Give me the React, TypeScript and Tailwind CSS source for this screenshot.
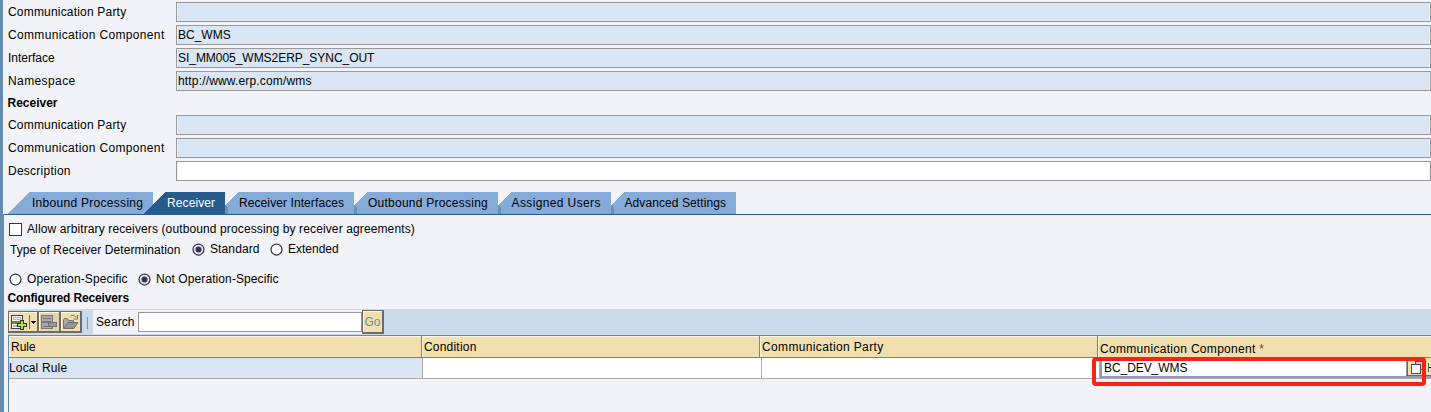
import type { ReactNode } from "react";

function Field({ label, ls, value, vls = "", white = false }: { label: string; ls: string; value?: string; vls?: string; white?: boolean }) {
  return (
    <div className="flex h-[23px] shrink-0 items-start pl-[8px]">
      <span className={"mt-[1px] w-[168px] shrink-0 leading-[18px] " + ls}>{label}</span>
      <div
        className={
          "h-[20px] grow border border-[#989898] pl-[1px] leading-[18px] shadow-[inset_1px_0_#eef3f9,inset_-1px_0_#eef3f9] " +
          (white ? "bg-white " : "bg-[#d9e5f2] ") + vls
        }
      >
        {value}
      </div>
    </div>
  );
}

function Tab({ children, box, slant, active = false, notch = false }: { children: ReactNode; box: string; slant: number; active?: boolean; notch?: boolean }) {
  const fill = active ? "#265b8d" : "#84abd9";
  return (
    <div className={"relative flex h-[22px] shrink-0 items-center " + box}>
      <svg className="absolute inset-0 h-full w-full" shapeRendering="crispEdges">
        {notch && <rect x="0" y="13" width="3" height="9" fill="#6790b5" />}
        <path d={notch ? "M3 22V15L0 13L13 0H400V22Z" : `M0 22L${slant} 0H400V22Z`} fill={fill} />
      </svg>
      <span className={"relative whitespace-nowrap leading-[18px] " + (active ? "text-white" : "")}>{children}</span>
    </div>
  );
}

function Radio({ on = false, className }: { on?: boolean; className: string }) {
  return (
    <svg className={"shrink-0 " + className} width="13" height="13" viewBox="0 0 13 13">
      <circle cx="6.5" cy="6.5" r="5.5" fill={on ? "#e4e7f0" : "#fff"} stroke="#30344d" strokeWidth="1.25" />
      {on && <circle cx="6.5" cy="6.5" r="3" fill="#30344d" />}
    </svg>
  );
}

function AddIcon() {
  return (
    <svg width="28" height="19" viewBox="0 0 28 19" shapeRendering="crispEdges">
      <rect x="2.5" y="3.5" width="11" height="13" fill="#f4f7fa" stroke="#39434f" />
      <rect x="4" y="5" width="8" height="3" fill="#a9bdd1" />
      <rect x="5" y="6" width="6" height="1" fill="#fff" />
      <rect x="3" y="9" width="9" height="3" fill="#6f8e16" />
      <rect x="4" y="13" width="5" height="2" fill="#a3b7cc" />
      <path d="M11.5 8.5h3v3h3v3h-3v3h-3v-3h-3v-3h3z" fill="#bddb60" stroke="#28371a" />
      <rect x="20" y="3" width="1" height="14" fill="#666" />
      <path d="M22 9h5v1h-1v1h-1v1h-1v-1h-1v-1h-1z" fill="#111" />
    </svg>
  );
}

function RemoveIcon() {
  return (
    <svg width="20" height="19" viewBox="0 0 20 19" shapeRendering="crispEdges">
      <rect x="1" y="1" width="19" height="18" fill="#d6cbb0" opacity="0.5" />
      <rect x="2.5" y="3.5" width="11" height="13" fill="#aaa" stroke="#777" />
      <rect x="4" y="6" width="8" height="1" fill="#777" />
      <rect x="3" y="9" width="9" height="2" fill="#777" />
      <rect x="4" y="14" width="6" height="1" fill="#777" />
      <rect x="9.5" y="10.5" width="8" height="4" fill="#999" stroke="#707070" />
    </svg>
  );
}

function OpenIcon() {
  return (
    <svg width="19" height="19" viewBox="0 0 19 19">
      <path d="M2.5 16.5V7.5l1-1h3l1 2h5v2" fill="#aaa" stroke="#777" />
      <path d="M2.5 16.5L7 10.5h10l-4 6z" fill="#969696" stroke="#707070" />
      <path d="M9.5 4.5Q12 1.5 15.5 5.5M16.5 3v4h-4" fill="none" stroke="#777" />
    </svg>
  );
}

const head = "flex shrink-0 items-center border-r border-[#6488ab] bg-[#f2dfae] pl-[2px] shadow-[inset_1px_1px_#fdf7e6] ";

export default function App() {
  return (
    <div className="relative flex h-[412px] w-[1431px] flex-col overflow-hidden bg-[#f2f3f8] font-['Liberation_Sans',Arial,sans-serif] text-[12px] text-black">
      <div className="flex h-[214px] shrink-0">
        <div className="w-[3px] shrink-0 bg-[#648bb0]" />
        <div className="flex min-w-0 grow flex-col">
          <div className="-ml-[3px] flex flex-col pt-[2px]">
            <Field label="Communication Party" ls="tracking-[0.19px]" />
            <Field label="Communication Component" ls="tracking-[0.34px]" value="BC_WMS" />
            <Field label="Interface" ls="" value="SI_MM005_WMS2ERP_SYNC_OUT" vls="tracking-[-0.04px]" />
            <Field label="Namespace" ls="tracking-[0.4px]" value="http://www.erp.com/wms" vls="tracking-[0.16px]" />
            <div className="h-[21px] pl-[7.5px] font-bold leading-[18px]">Receiver</div>
            <Field label="Communication Party" ls="tracking-[0.19px]" />
            <Field label="Communication Component" ls="tracking-[0.34px]" />
            <Field label="Description" ls="tracking-[0.25px]" white />
          </div>
          <div className="mt-[8px] flex pl-[5px]">
            <Tab box="w-[145px] pl-[24px] tracking-[0.29px]" slant={21}>Inbound Processing</Tab>
            <div className="relative -ml-[10px] flex">
              <Tab box="w-[82px] pl-[24px] tracking-[0.1px]" slant={22} active>Receiver</Tab>
            </div>
            <Tab box="w-[129px] pl-[14px] tracking-[0.09px]" slant={13} notch>Receiver Interfaces</Tab>
            <Tab box="w-[144px] pl-[14px] tracking-[0.24px]" slant={13} notch>Outbound Processing</Tab>
            <Tab box="w-[113px] pl-[13.5px] tracking-[0.38px]" slant={13} notch>Assigned Users</Tab>
            <Tab box="w-[125px] pl-[13.5px] tracking-[0.09px]" slant={13} notch>Advanced Settings</Tab>
          </div>
        </div>
      </div>

      <div className="flex h-[198px] shrink-0">
        <div className="w-[4px] shrink-0 bg-[#648bb0]" />
        <div className="flex min-w-0 grow flex-col border-t border-[#265b8d]">
          <div className="flex h-[24px] items-start pl-[5px] pt-[5px]">
            <div className="mt-[3px] h-[13px] w-[13px] border border-[#30344d] bg-white" />
            <span className="ml-[5px] leading-[18px] tracking-[0.12px]">Allow arbitrary receivers (outbound processing by receiver agreements)</span>
          </div>
          <div className="flex h-[31px] items-start pl-[6px] pt-[1px]">
            <span className="w-[182px] leading-[20px] tracking-[0.08px]">Type of Receiver Determination</span>
            <Radio on className="mt-[3px]" />
            <span className="ml-[5px] w-[60px] leading-[18px] tracking-[0.12px]">Standard</span>
            <Radio className="mt-[3px]" />
            <span className="ml-[5px] leading-[18px]">Extended</span>
          </div>
          <div className="flex h-[18px] items-start pl-[5px]">
            <Radio className="mt-[3px]" />
            <span className="ml-[5px] w-[111px] leading-[18px] tracking-[0.11px]">Operation-Specific</span>
            <Radio on className="mt-[3px]" />
            <span className="ml-[5px] leading-[18px] tracking-[0.09px]">Not Operation-Specific</span>
          </div>
          <div className="h-[21px] pl-[3.5px] font-bold leading-[20px] tracking-[-0.13px]">Configured Receivers</div>

          <div className="ml-[4px] flex h-[26px] items-start bg-[#cadaea]">
            <div className="mt-[2px] flex h-[22px] w-[74px] shrink-0 gap-[2px] bg-[#6b6b6b] p-px pb-[2px]">
              <div className="w-[28px] shrink-0 bg-[#f2dfae] shadow-[inset_1px_1px_#fff8df]"><AddIcon /></div>
              <div className="w-[20px] shrink-0 bg-[#f2dfae] shadow-[inset_1px_1px_#fff8df]"><RemoveIcon /></div>
              <div className="w-[19px] shrink-0 bg-[#f2dfae] shadow-[inset_1px_1px_#fff8df]"><OpenIcon /></div>
            </div>
            <div className="ml-[5px] mt-[8px] h-[12px] w-px bg-[#8294a6]" />
            <div className="ml-[5px] mt-px flex h-[24px] w-[269px] bg-[#f2f3f8]">
              <span className="ml-[3px] w-[42px] leading-[24px] tracking-[0.1px]">Search</span>
              <div className="mt-[2px] h-[20px] w-[224px] border border-[#989898] bg-white" />
            </div>
            <div className="mt-px flex h-[24px] w-[22px] items-center justify-center border border-b-2 border-r-2 border-[#6b6b6b] bg-[#f2dfae] text-[#648bb0] shadow-[inset_1px_1px_#fff8df]">Go</div>
          </div>

          <div className="ml-[4px] h-[77px] border-l border-t border-[#5f89b3]">
            <div className="flex h-[22px] border-b border-[#5f89b3]">
              <div className={head + "w-[413px]"}><span>Rule</span></div>
              <div className={head + "w-[338px] tracking-[0.2px]"}>Condition</div>
              <div className={head + "w-[338px] tracking-[0.36px]"}>Communication Party</div>
              <div className={head + "w-[340px] pt-[4px] tracking-[0.3px]"}>Communication Component&nbsp;<span className="text-[#b2182b]">*</span></div>
            </div>
            <div className="flex h-[21px] border-b border-[#aaaaaa] bg-white">
              <div className="w-[414px] shrink-0 border-r border-[#aaaaaa] bg-[#d9e5f2] leading-[20px] tracking-[0.15px]">Local Rule</div>
              <div className="w-[339px] shrink-0 border-r border-[#aaaaaa]" />
              <div className="w-[338px] shrink-0 border-r border-[#aaaaaa]" />
              <div className="flex h-[20px] grow overflow-hidden border-b-2 border-[#9695bd] bg-white">
                <div className="w-[306px] shrink-0 border-l-2 border-[#9695bd] pl-[2px] leading-[20px] tracking-[-0.07px]">BC_DEV_WMS</div>
                <svg width="25" height="18" viewBox="0 0 25 18" shapeRendering="crispEdges">
                  <rect width="25" height="18" fill="#f2dfae" />
                  <rect width="1" height="18" fill="#989898" />
                  <rect x="1" width="1" height="18" fill="#666" />
                  <rect y="17" width="25" height="1" fill="#666" />
                  <rect x="9.5" y="3.5" width="9" height="8" fill="#b9cedb" stroke="#555" />
                  <rect x="5.5" y="6.5" width="9" height="9" fill="#fff" stroke="#444" />
                  <rect x="22" y="5" width="1" height="9" fill="#555" />
                  <rect x="23" y="9" width="2" height="1" fill="#111" />
                </svg>
              </div>
            </div>
          </div>
        </div>
      </div>
      <div className="absolute left-[1092px] top-[357px] h-[29px] w-[334px] rounded-[4px] border-4 border-[#ff2015]" />
    </div>
  );
}
